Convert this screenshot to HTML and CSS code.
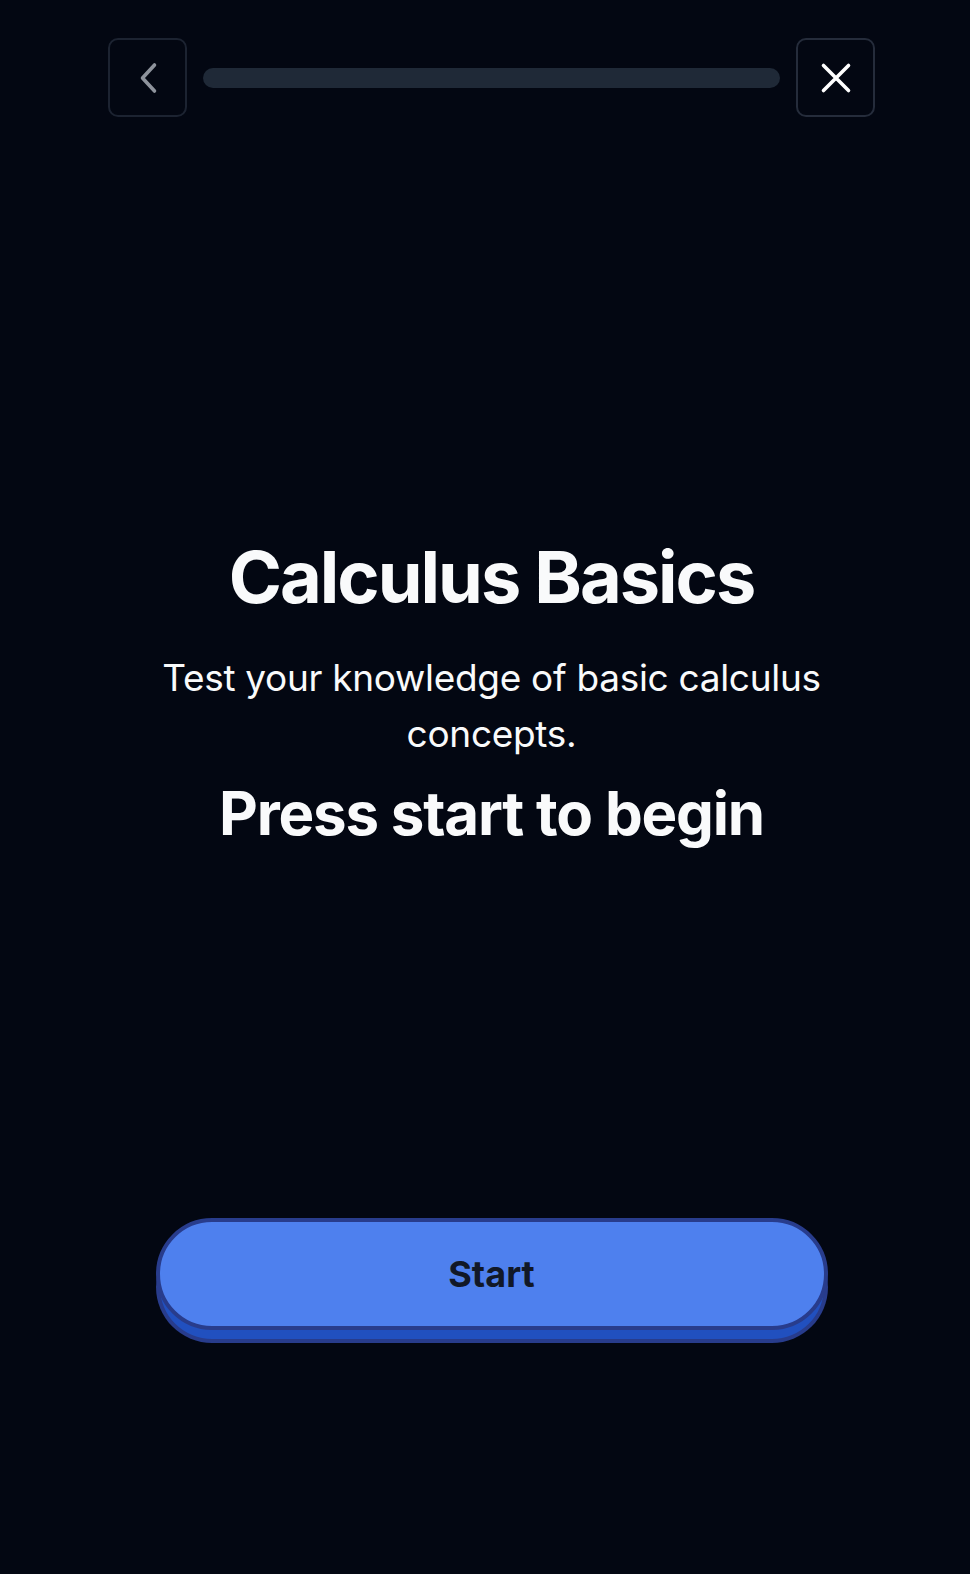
FILE: index.html
```html
<!DOCTYPE html>
<html lang="en">
<head>
<meta charset="utf-8">
<title>Calculus Basics</title>
<link rel="stylesheet" href="styles.css">
</head>
<body>
<div class="page">
  <header class="topbar">
    <button class="icon-btn back" aria-label="Back">
      <svg width="20" height="32" viewBox="0 0 20 32"><path d="M16.5 3 L4.5 16 L16.5 29" fill="none" stroke="#8e939c" stroke-width="3.6" stroke-linecap="round" stroke-linejoin="round"/></svg>
    </button>
    <div class="progress"><div class="progress-fill" style="width:0%"></div></div>
    <button class="icon-btn close" aria-label="Close">
      <svg width="32" height="32" viewBox="0 0 32 32"><path d="M3.5 3.5 L28.5 28.5 M28.5 3.5 L3.5 28.5" fill="none" stroke="#ffffff" stroke-width="3.6" stroke-linecap="round"/></svg>
    </button>
  </header>
  <main class="intro">
    <h1 class="title">Calculus Basics</h1>
    <p class="subtitle">Test your knowledge of basic calculus concepts.</p>
    <h2 class="prompt">Press start to begin</h2>
  </main>
  <div class="actions">
    <button class="start-btn">Start</button>
  </div>
</div>
</body>
</html>
```

FILE: styles.css
```css
* { box-sizing: border-box; }
html, body {
  margin: 0;
  padding: 0;
  background: #030712;
  font-family: Inter, "Noto Sans", "Liberation Sans", sans-serif;
  color: #f9fafb;
}
.page {
  min-height: 1574px;
  padding: 38px 95px 0 108px;
  display: flex;
  flex-direction: column;
}
.topbar {
  display: flex;
  align-items: center;
  gap: 16px;
}
.icon-btn {
  width: 79px;
  height: 79px;
  flex: none;
  background: transparent;
  border: 2px solid #1c2331;
  border-radius: 10px;
  display: flex;
  align-items: center;
  justify-content: center;
  padding: 0;
}
.close { border-color: #252c3b; }
.progress {
  flex: 1;
  height: 20px;
  border-radius: 10px;
  background: #1f2937;
  overflow: hidden;
}
.progress-fill { height: 100%; background: #4f81ee; }
.intro {
  margin-top: 424px;
  display: flex;
  flex-direction: column;
  align-items: center;
  text-align: center;
}
.title {
  margin: 0;
  font-size: 72px;
  line-height: 72px;
  font-weight: 700;
  letter-spacing: -2px;
}
.subtitle {
  margin: 37px 0 0;
  font-size: 37px;
  line-height: 56px;
  font-weight: 400;
  letter-spacing: -0.3px;
  max-width: 690px;
}
.prompt {
  margin: 21px 0 0;
  font-size: 60px;
  line-height: 60px;
  font-weight: 700;
  letter-spacing: -1.2px;
}
.actions {
  margin-top: 375px;
  display: flex;
  justify-content: center;
}
.start-btn {
  width: 672px;
  height: 112px;
  border: 4px solid #283c8c;
  border-radius: 999px;
  background: #4e80ee;
  box-shadow: 0 13px 0 -4px #2150bf, 0 13px 0 0 #283c8c;
  font-family: Inter, "Noto Sans", "Liberation Sans", sans-serif;
  font-size: 36px;
  font-weight: 700;
  color: #111827;
  padding: 0;
}
```
